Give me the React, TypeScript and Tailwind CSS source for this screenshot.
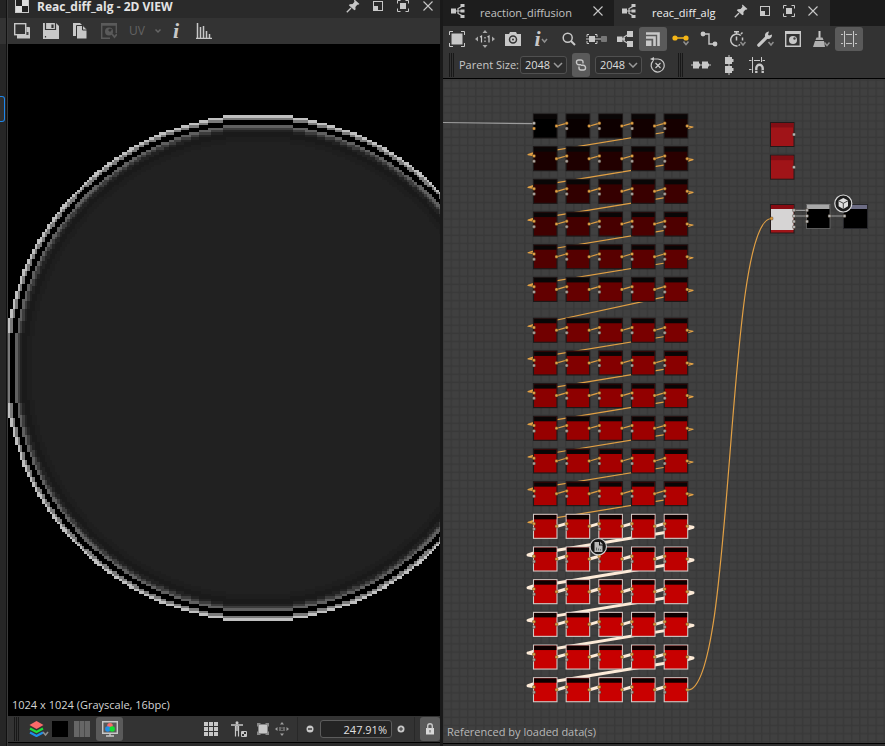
import React from "react";

type Kids = { children: React.ReactNode };

const INK = "#c8c8c8";

function Glyph({ children, w = 16, h = 16 }: Kids & { w?: number; h?: number }) {
  return (
    <svg width={w} height={h} viewBox={`0 0 ${w} ${h}`} fill="none" stroke={INK} className="block shrink-0" aria-hidden="true">
      {children}
    </svg>
  );
}

function Tool({ label, className = "w-7", children }: Kids & { label: string; className?: string }) {
  return (
    <button type="button" aria-label={label} className={`flex h-6 shrink-0 items-center justify-center ${className}`}>
      {children}
    </button>
  );
}

function Grip() {
  return (
    <span className="flex h-6 shrink-0 gap-px">
      <span className="w-px bg-[#181818]" />
      <span className="w-px bg-[#181818]" />
      <span className="w-px bg-[#181818]" />
    </span>
  );
}

const Caret = ({ x, y }: { x: number; y: number }) => (
  <path d={`M${x} ${y}l2.5 3 2.5-3`} stroke="#8f8f8f" strokeWidth="1.5" />
);

const PinIcon = () => (
  <Glyph w={14} h={14}>
    <path d="M8.5.5l5 4.5-1.3.8-.9-.1-1.900 2.200.2 2.600-1.200.8L2.800 6.200l1-1 2.800-.1 1.900-2.300-.5-1z" fill={INK} stroke="none" />
    <path d="M5 9L.8 13.2" strokeWidth="1.3" />
  </Glyph>
);
const DockIcon = () => (
  <Glyph w={12} h={12}>
    <rect x="1.5" y="1.5" width="9" height="9" />
    <rect x="1" y="6" width="5" height="5" fill={INK} stroke="none" />
  </Glyph>
);
const MaxIcon = () => (
  <Glyph w={14} h={14}>
    <path d="M1.5 4.5v-3h3M9.5 1.5h3v3M12.5 9.5v3h-3M4.5 12.5h-3v-3" />
    <rect x="4" y="4" width="6" height="6" fill={INK} stroke="none" />
  </Glyph>
);
const CloseIcon = () => (
  <Glyph w={12} h={12}>
    <path d="M1.5 1.5l9 9M10.5 1.5l-9 9" strokeWidth="1.1" />
  </Glyph>
);
const GraphIcon = () => (
  <Glyph w={16} h={16}>
    <path d="M5 8h3M13 3L8 5.5v5L13 13M8 8h4" strokeWidth="1.2" />
    <path d="M1 5.5h5v5H1zM10.5 1h4v3h-4zM10.5 6.5h4v3h-4zM10.5 12h4v3h-4z" fill={INK} stroke="none" />
  </Glyph>
);
const ChevronIcon = ({ dim = false }: { dim?: boolean }) => (
  <Glyph w={10} h={6}>
    <path d={dim ? "M2.5 1.5L5 4l2.5-2.5" : "M1 1l4 4 4-4"} stroke={dim ? "#666" : "#9a9a9a"} strokeWidth="1.5" />
  </Glyph>
);

function WindowButtons({ className }: { className: string }) {
  return (
    <>
      <Tool label="Pin" className={className}><PinIcon /></Tool>
      <Tool label="Dock" className={className}><DockIcon /></Tool>
      <Tool label="Maximize" className={className}><MaxIcon /></Tool>
      <Tool label="Close" className={className}><CloseIcon /></Tool>
    </>
  );
}

/* ---------- 2D view ---------- */

const CELL = 2.479;

// Rasterises a disc onto the texel grid, one run of texels per row.
function discPath(radius: number) {
  const n = Math.ceil(radius) + 1;
  let d = "";
  for (let row = -n; row < n; row++) {
    const y = row + 0.5;
    const rest = radius * radius - y * y;
    if (rest <= 0) continue;
    const half = Math.floor(Math.sqrt(rest) + 0.5);
    if (half > 0) d += `M${-half} ${row}h${half * 2}v1h${-half * 2}z`;
  }
  return d;
}

const RINGS: [number, string][] = [
  [102.46, "#c0c0c0"],
  [101.46, "#7a7a7a"],
  [100.46, "#000000"],
  [98.46, "#606060"],
  [97.46, "#3c3c3c"],
  [96.46, "#222222"],
  [95.46, "#1a1a1a"],
  [93.46, "#1e1e1e"],
  [91.46, "#212121"],
];

function Texture() {
  return (
    <svg className="absolute inset-0 h-full w-full" shapeRendering="crispEdges" aria-label="Texture preview">
      <g transform={`translate(250 324) scale(${CELL})`}>
        {RINGS.map(([r, color]) => (
          <path key={r} d={discPath(r)} fill={color} />
        ))}
      </g>
    </svg>
  );
}

function ViewPanel() {
  return (
    <section className="flex min-w-0 flex-1 flex-col">
      <header className="flex h-[18px] shrink-0 items-center bg-[#2a2a2a] pb-[6px] pl-[7px]">
        <Glyph w={14} h={14}>
          <rect x=".5" y=".5" width="13" height="13" fill="#222" />
          <path d="M7 1h6v6H7zM1 7h6v6H1z" fill="#dedede" stroke="none" />
        </Glyph>
        <h1 className="ml-2 flex-1 pt-0.5 text-[12px] font-bold leading-3 text-[#e4e4e4]">Reac_diff_alg - 2D VIEW</h1>
        <WindowButtons className="w-[25px]" />
      </header>

      <div className="flex h-[26px] shrink-0 items-center bg-[#333333]">
        <Tool label="View outputs">
          <Glyph w={18}>
            <path d="M13.5 4.5h3v8h-3" fill={INK} />
            <path d="M4 12h13v3.5H4z" fill={INK} stroke="none" />
            <rect x="1.7" y=".7" width="11" height="11" fill="#333" strokeWidth="1.4" />
            <path d="M13.5 9h2v3h-2z" fill="#444" stroke="none" />
          </Glyph>
        </Tool>
        <Tool label="Save" className="w-[29px]">
          <Glyph>
            <path d="M0 0h13l3 3v13H0z" fill={INK} stroke="none" />
            <path d="M2.5 0v6.5h10V0M9 1.5v3.5M10 1.5v3.5M2.5 13v1.5" stroke="#333" strokeWidth="1.2" />
          </Glyph>
        </Tool>
        <Tool label="Copy" className="w-[29px]">
          <Glyph w={14}>
            <path d="M0 0h7l3 3v10H0z" fill={INK} stroke="none" />
            <path d="M3.5 2.5h6.5l4 4V16H3.5z" fill={INK} stroke="#333" />
            <path d="M9.500 3v4H14" stroke="#333" />
          </Glyph>
        </Tool>
        <Tool label="Environment" className="w-[29px]">
          <Glyph>
            <path d="M15.3 10V.7H.7v14.6H9M1 2h14" stroke="#5a5a5a" strokeWidth="1.4" />
            <circle cx="8" cy="8.5" r="4" fill="#5a5a5a" stroke="none" />
            <path d="M7 7l2-1.500 2 1-2 2.500z" fill="#333" stroke="none" />
            <path d="M11 11l2.500 3L16 11" stroke="#5a5a5a" strokeWidth="1.8" />
          </Glyph>
        </Tool>
        <button type="button" className="flex h-6 w-[41px] shrink-0 items-center gap-2 pl-[6px] text-[12px] text-[#636363]">
          UV
          <ChevronIcon dim />
        </button>
        <Tool label="Information" className="w-6">
          <span className="font-['Liberation_Serif',serif] text-[22px] font-bold italic leading-5 text-[#c8c8c8]">i</span>
        </Tool>
        <Tool label="Histogram" className="w-8">
          <Glyph>
            <path d="M0 15.500h16M1.500 0v15M4.500 4v11M7.500 3v12M10.500 8v7M13.500 11v4" strokeWidth="1.5" />
          </Glyph>
        </Tool>
      </div>

      <div className="relative flex min-h-0 flex-1 items-end overflow-hidden bg-black">
        <Texture />
        <p className="relative pb-[3px] pl-1 text-[11px] leading-4 text-[#d4d4d4]">1024 x 1024 (Grayscale, 16bpc)</p>
      </div>

      <footer className="flex h-[26px] shrink-0 items-center bg-[#333333] pl-[6px]">
        <Grip />
        <Tool label="Channels" className="ml-[6px] w-[27px]">
          <Glyph w={20}>
            <path d="M1 11.500l6.500 3.500 6.500-3.500" stroke="#1f8fe8" strokeWidth="2.2" />
            <path d="M1 7.500L7.500 11 14 7.500" stroke="#1fe03a" strokeWidth="2.2" />
            <path d="M7.500 0l7 4-7 4-7-4z" fill="#fb6a6a" stroke="none" />
            <Caret x={14} y={11} />
          </Glyph>
        </Tool>
        <button type="button" aria-label="Background colour" className="h-4 w-4 shrink-0 bg-black" />
        <Tool label="Tiling">
          <Glyph>
            <path d="M0 0h16v16H0z" fill="#666" stroke="none" />
            <path d="M5.500 0v16M10.500 0v16" stroke="#4a4a4a" />
          </Glyph>
        </Tool>
        <Tool label="Colour display" className="w-[27px] rounded-[3px] bg-[#5a5a5a]">
          <Glyph>
            <path d="M.7.7h14.6v11.6H.7zM8 12v2.500M4 15h8" strokeWidth="1.4" />
            <circle cx="8" cy="4.800" r="2.800" fill="#f86a6a" stroke="none" />
            <circle cx="5.800" cy="8" r="2.700" fill="#1f8fe8" stroke="none" />
            <circle cx="10.200" cy="8" r="2.700" fill="#10e030" stroke="none" />
          </Glyph>
        </Tool>
        <span className="flex-1" />
        <Tool label="Grid">
          <Glyph w={14} h={14}>
            <path d="M0 0h4v4H0zM5 0h4v4H5zM10 0h4v4h-4zM0 5h4v4H0zM5 5h4v4H5zM10 5h4v4h-4zM0 10h4v4H0zM5 10h4v4H5zM10 10h4v4h-4z" fill={INK} stroke="none" />
          </Glyph>
        </Tool>
        <Tool label="Physical size">
          <Glyph>
            <circle cx="6" cy="1.800" r="1.500" fill={INK} stroke="none" />
            <path d="M0 4h12M6 4v6" strokeWidth="1.4" />
            <path d="M4.500 5v10.500M7.500 5v10.500" strokeWidth="1.2" />
            <path d="M10.500 10.500h5v5h-5z" fill="#333" />
            <path d="M11 11h2v2h-2zM13 13h2v2h-2z" fill={INK} stroke="none" />
          </Glyph>
        </Tool>
        <Tool label="Fit to view" className="w-5">
          <Glyph w={12} h={12}>
            <path d="M0 0h3l1 1h4l1-1h3v3l-1 1v4l1 1v3H9l-1-1H4l-1 1H0V9l1-1V4L0 3z" fill="#888" stroke="none" />
            <path d="M2 2h8v8H2z" fill={INK} stroke="none" />
          </Glyph>
        </Tool>
        <Tool label="Actual size" className="w-[18px]">
          <Glyph w={14} h={14}>
            <path d="M7 0l2 2.500H5zM7 14l-2-2.500h4zM0 7l2.500-2v4zM14 7l-2.500 2V5z" fill="#a0a0a0" stroke="none" />
            <path d="M5 5v4M9 5v4M7 5.500v1M7 8v1" stroke="#a0a0a0" />
          </Glyph>
        </Tool>
        <span className="ml-[6px] mr-[5px] h-6 w-px bg-[#282828]" />
        <Tool label="Zoom out" className="w-[14px]">
          <Glyph w={8} h={8}>
            <circle cx="4" cy="4" r="3.500" fill={INK} stroke="none" />
            <path d="M2 4h4" stroke="#333" strokeWidth="1.4" />
          </Glyph>
        </Tool>
        <input
          aria-label="Zoom"
          defaultValue="247.91%"
          className="ml-[3px] h-[18px] w-[72px] rounded-[3px] border border-[#5c5c5c] bg-[#242424] pr-1 text-right text-[11px] leading-4 text-[#e0e0e0]"
        />
        <Tool label="Zoom in" className="w-[18px]">
          <Glyph w={8} h={8}>
            <circle cx="4" cy="4" r="3.500" fill={INK} stroke="none" />
            <path d="M2 4h4M4 2v4" stroke="#333" />
          </Glyph>
        </Tool>
        <span className="ml-1 mr-[5px] h-6 w-px bg-[#282828]" />
        <Tool label="Lock" className="w-5 rounded-[3px] bg-[#5a5a5a]">
          <Glyph w={8} h={12}>
            <path d="M0 5h8v6.500H0z" fill="#d8d8d8" stroke="none" />
            <path d="M1.700 5.500V3a2.300 2.300 0 014.600 0v2.500" strokeWidth="1.4" />
            <path d="M4 7v2.500" stroke="#5a5a5a" />
          </Glyph>
        </Tool>
      </footer>
      <div className="h-1 shrink-0 border-t border-black bg-[#2b2b2b]" />
    </section>
  );
}

/* ---------- Graph ---------- */

const UNIT = 8.17;
const STEP = UNIT * 4;
const ROWS = 18;
const COLS = 5;
const SELECTED_FROM = 12;
const AMBER = "#e2a044";
const CREAM = "#fdebd8";

const rowTop = (r: number) => 35 + r * STEP + (r > 5 ? UNIT : 0);
const colLeft = (c: number) => 90.5 + c * STEP;

function Port({ x, y, color = AMBER }: { x: number; y: number; color?: string }) {
  return <rect x={x - 1.5} y={y - 1.5} width="3" height="3" rx="1" fill={color} stroke="#3a2a18" strokeWidth=".4" />;
}

function Chain() {
  const wires: React.ReactNode[] = [];
  const nodes: React.ReactNode[] = [];
  const links: React.ReactNode[] = [];
  for (let r = 0; r < ROWS; r++) {
    const y = rowTop(r);
    const selected = r >= SELECTED_FROM;
    const wire = { stroke: selected ? CREAM : AMBER, strokeWidth: selected ? 3 : 1.2, fill: "none" };
    if (r < ROWS - 1) {
      const n = rowTop(r + 1);
      wires.push(
        <path key={r} {...wire} strokeLinejoin="round" d={`M244.5 ${y + 12}L250 ${y + 13}L245 ${y + 14.5}L85 ${n + 8}L91 ${n + 9}M85 ${n + 8}l6-2`} />,
      );
    }
    for (let c = 0; c < COLS; c++) {
      const x = colLeft(c);
      const i = r * COLS + c;
      const red = i === 0 ? 0 : Math.round(5 + 4.3 * i - 0.0235 * i * i);
      nodes.push(
        <g key={i}>
          <rect x={x} y={y} width="23.5" height="24" fill={`rgb(${red},0,0)`} stroke={selected ? "#d0cac6" : "#1c1818"} strokeWidth="1.1" />
          <rect x={x + 0.6} y={y + 0.6} width="22.3" height="4.4" fill={selected ? "#0e0000" : "#090606"} />
        </g>,
      );
      if (c < COLS - 1) links.push(<path key={`l${i}`} {...wire} d={`M${x + 23.5} ${y + 12}L${x + STEP} ${y + 9.3}`} />);
      links.push(
        <g key={`p${i}`}>
          <Port x={x + 0.5} y={y + 9.3} color={i === 0 ? "#b8b8b8" : AMBER} />
          <Port x={x + 0.5} y={y + 14.6} color={i === 0 ? AMBER : "#a8a09c"} />
          <Port x={x + 23} y={y + 12} />
        </g>,
      );
    }
  }
  return (
    <>
      <path d="M0 43.5L91 44.7" stroke="#9c9c9c" strokeWidth="1.2" />
      {wires}
      {nodes}
      {links}
    </>
  );
}

function OutputNodes() {
  const gray = "#b4b4b4";
  return (
    <g>
      {[43.5, 76.2].map((y) => (
        <g key={y}>
          <rect x="327.5" y={y} width="23.5" height="24" fill="#a01418" stroke="#241a1a" />
          <rect x="328" y={y + 0.5} width="22.5" height="4.5" fill="#830e14" />
          <Port x={351} y={y + 12} color={gray} />
        </g>
      ))}
      <path d="M351 131.3h13M351 137h13M387 137h15" stroke="#9a9a9a" strokeWidth="1.2" />
      <rect x="327.5" y="125.5" width="23.5" height="28.5" fill="#a01418" stroke="#241a1a" />
      <rect x="328" y="126" width="22.5" height="4" fill="#870b12" />
      <rect x="328" y="130" width="22.5" height="21" fill="#d6d4d4" />
      <rect x="363.5" y="125.5" width="23.5" height="24" fill="#000" stroke="#6c6c6c" strokeWidth=".8" />
      <rect x="364" y="125.5" width="22.5" height="4.500" fill="#a8a8a8" />
      <rect x="400.5" y="125.5" width="24" height="24" fill="#000" stroke="#26262a" />
      <rect x="401" y="126" width="23" height="4" fill="#6c6c84" />
      {[131.3, 137, 142.5, 148].map((y) => <Port key={y} x={351} y={y} color={gray} />)}
      {[131.3, 137, 142.5].map((y) => <Port key={y} x={364} y={y} color={gray} />)}
      <Port x={386.5} y={137} color={gray} />
      <Port x={401.5} y={137} color={gray} />
      <path d="M245 611C292 610 282 139.5 328.5 139.5" fill="none" stroke={AMBER} strokeWidth="1.2" />
      <Port x={328.5} y={139.5} />
      <circle cx="400.3" cy="124.5" r="8.5" fill="#1d1d1d" stroke="#dadada" strokeWidth="1.2" />
      <path d="M400.3 119l4.700 2.600v5.600l-4.700 2.700-4.700-2.700v-5.600z" fill="#e0e0e0" />
      <path d="M395.6 121.8l4.700 2.500 4.700-2.500M400.3 124.3v5.400" fill="none" stroke="#333" strokeWidth=".9" />
    </g>
  );
}

function GraphCanvas() {
  return (
    <svg className="absolute inset-0 h-full w-full" aria-label="Node graph">
      <defs>
        <pattern id="grid" width={UNIT} height={UNIT} x="0.3" y="1.7" patternUnits="userSpaceOnUse">
          <rect width={UNIT} height={UNIT} fill="#393939" />
          <rect x=".6" y=".2" width="6.6" height="6.6" fill="#404040" />
        </pattern>
      </defs>
      <rect width="100%" height="100%" fill="url(#grid)" />
      <Chain />
      <OutputNodes />
      <circle cx="155.3" cy="467.7" r="8.2" fill="#161616" stroke="#cfcfcf" strokeWidth="1.2" />
      <path d="M151.5 463h4.5v3.500h3.500v6.500h-8z" fill="#b8b8b8" />
      <path d="M157 462.500l3 3h-3z" fill="#b8b8b8" />
      <path d="M153.500 468.500v3M155.500 469.500v2M157.500 470v1.500" stroke="#444" strokeWidth=".7" fill="none" />
    </svg>
  );
}

function SizeSelect({ label }: { label: string }) {
  return (
    <span className="relative flex shrink-0 items-center">
      <select
        aria-label={label}
        className="h-[18px] w-[47px] appearance-none rounded-[3px] border border-[#505050] bg-[#2c2c2c] pl-1 text-[11px] leading-4 text-[#dcdcdc]"
      >
        <option>2048</option>
      </select>
      <span className="pointer-events-none absolute right-1">
        <ChevronIcon />
      </span>
    </span>
  );
}

function GraphToolbar() {
  return (
    <div className="flex h-[26px] shrink-0 items-center overflow-hidden">
      <Tool label="Fit all">
        <Glyph>
          <path d="M.5 4V.5H4M12 .5h3.500V4M15.500 12v3.500H12M4 15.500H.5V12" />
          <path d="M2.500 2.500h11v11h-11z" fill={INK} stroke="none" />
        </Glyph>
      </Tool>
      <Tool label="Actual size">
        <Glyph w={20} h={18}>
          <path d="M10 0l2.500 3h-5zM10 18l-2.500-3h5zM0 9l3-2.500v5zM20 9l-3 2.500v-5z" fill="#a8a8a8" stroke="none" />
          <path d="M5 7l1.500-1v6.500M12.500 7l1.500-1v6.500M10 7v1.500M10 10.500V12" strokeWidth="1.2" />
        </Glyph>
      </Tool>
      <Tool label="Snapshot">
        <Glyph>
          <path d="M0 3h4l1-2h6l1 2h4v12H0z" fill={INK} stroke="none" />
          <circle cx="8" cy="8.500" r="3.500" stroke="#333" strokeWidth="1.5" />
          <circle cx="8" cy="8.500" r="1" fill="#333" stroke="none" />
        </Glyph>
      </Tool>
      <Tool label="Information">
        <span className="font-['Liberation_Serif',serif] text-[22px] font-bold italic leading-5 text-[#c8c8c8]">i</span>
        <Glyph w={7} h={10}><Caret x={1} y={5} /></Glyph>
      </Tool>
      <Tool label="Search">
        <Glyph w={14} h={14}>
          <circle cx="5.700" cy="5.700" r="4.500" strokeWidth="1.5" />
          <path d="M9 9l4 4" strokeWidth="2" />
        </Glyph>
      </Tool>
      <Tool label="Connected nodes">
        <Glyph w={22} h={10}>
          <path d="M1 3V.5h2M9 .5h2V3M11 7v2.500H9M3 9.500H1V7M0 5h16" />
          <path d="M3 2h6v6H3z" fill={INK} stroke="none" />
          <path d="M15.500 2.500h5v5h-5z" fill="#777" stroke="#777" />
        </Glyph>
      </Tool>
      <Tool label="Graph hierarchy">
        <Glyph>
          <path d="M5 8h3M12 3L7 6v4l5 3" strokeWidth="1.3" />
          <path d="M0 5.500h5.500v5.500H0zM10 0h6v6h-6zM10 10h6v6h-6z" fill={INK} stroke="none" />
        </Glyph>
      </Tool>
      <Tool label="Align nodes" className="w-7 rounded-[3px] bg-[#5a5a5a]">
        <Glyph w={14} h={14}>
          <path d="M0 1.500h12.500V14M0 5.500h8.500V14" strokeWidth="2.6" />
          <path d="M0 8.500h5.500V14H0z" fill={INK} stroke="none" />
        </Glyph>
      </Tool>
      <Tool label="Link colour">
        <Glyph w={18} h={14}>
          <path d="M3 6h11" stroke="#f5b617" strokeWidth="1.5" />
          <circle cx="3" cy="6" r="2.600" fill="#f5b617" stroke="none" />
          <circle cx="14" cy="6" r="2.600" fill="#f5b617" stroke="none" />
          <Caret x={11.5} y={9.5} />
        </Glyph>
      </Tool>
      <Tool label="Link shape">
        <Glyph w={18}>
          <path d="M3 3h6v10h6" strokeWidth="1.4" />
          <circle cx="3" cy="3" r="2.400" fill={INK} stroke="none" />
          <circle cx="15" cy="13" r="2.400" fill={INK} stroke="none" />
        </Glyph>
      </Tool>
      <Tool label="Timings">
        <Glyph w={17}>
          <path d="M11.800 4.500A6 6 0 108.500 14.900M7.500 0v3M5 .7h5M12 3l1.500-1.500M7.500 5.500V9.500M13.500 6.500v3" strokeWidth="1.5" />
          <path d="M9.500 14.500l1.500-1" strokeWidth="1.3" />
          <Caret x={11.5} y={11} />
        </Glyph>
      </Tool>
      <Tool label="Tools">
        <Glyph w={17}>
          <path d="M1.800 14.200l8-8" strokeWidth="3.2" strokeLinecap="round" />
          <path d="M15 3.500l-3 1-1-1L12 .5A4 4 0 008 5.500 4 4 0 0011 8a4 4 0 004-4.500z" fill={INK} stroke="none" />
          <Caret x={11.5} y={11} />
        </Glyph>
      </Tool>
      <Tool label="Thumbnails">
        <Glyph>
          <path d="M.7 1.500h14.600v13.800H.7z" strokeWidth="1.4" />
          <path d="M0 0h16v3H0z" fill={INK} stroke="none" />
          <circle cx="8" cy="9" r="4" fill={INK} stroke="none" />
          <circle cx="9.500" cy="7.500" r="1.200" fill="#444" stroke="none" />
        </Glyph>
      </Tool>
      <Tool label="Clean">
        <Glyph w={17}>
          <path d="M6.500 0v7" strokeWidth="2" />
          <path d="M3.500 6.500h6l1 2.500h-8zM2 10h9l1 6H0z" fill="#b0b0b0" stroke="none" />
          <Caret x={11.5} y={11.5} />
        </Glyph>
      </Tool>
      <Tool label="Snap to grid" className="w-7 rounded-[3px] bg-[#5a5a5a]">
        <Glyph>
          <path d="M3.500 0v16M12.500 0v16M0 3.500h2M5 3.500h6M14 3.500h2M0 12.500h2M5 12.500h6M14 12.500h2" />
        </Glyph>
      </Tool>
    </div>
  );
}

function GraphPanel() {
  return (
    <section className="flex min-w-0 flex-1 flex-col">
      <nav className="flex h-[26px] shrink-0 items-start overflow-hidden bg-[#1b1b1b] text-[11px]">
        <div className="flex h-[26px] w-[171px] shrink-0 items-center bg-[#1d1d1d] pb-1 pl-[7px]">
          <GraphIcon />
          <button type="button" className="ml-[14px] flex-1 pt-1 text-left text-[#c2c2c2]">reaction_diffusion</button>
          <Tool label="Close" className="w-8"><CloseIcon /></Tool>
        </div>
        <div className="flex h-[26px] w-[216px] shrink-0 items-center bg-[#2d2d2d] pb-1 pl-[7px]">
          <GraphIcon />
          <button type="button" className="ml-[15px] flex-1 pt-1 text-left text-[#f0f0f0]">reac_diff_alg</button>
          <WindowButtons className="w-6" />
          <span className="w-[5px]" />
        </div>
      </nav>
      <div className="shrink-0 border-b border-black bg-[#333333]">
        <GraphToolbar />
        <div className="flex h-[26px] items-center overflow-hidden pl-[6px] text-[11px] text-[#c8c8c8]">
          <Grip />
          <span className="ml-[5px] w-[61px] shrink-0 whitespace-nowrap">Parent Size:</span>
          <SizeSelect label="Parent width" />
          <Tool label="Link sizes" className="mx-[5px] w-[18px] rounded-[3px] bg-[#5a5a5a]">
            <Glyph w={12} h={12}>
              <path d="M8 4.500V3a2 2 0 00-2-2H3.500a2 2 0 00-2 2v.5a2.200 2.200 0 002.200 2.200H6M4 7.500V9a2 2 0 002 2h2.500a2 2 0 002-2v-.5a2.200 2.200 0 00-2.200-2.200H6" strokeWidth="1.4" />
            </Glyph>
          </Tool>
          <SizeSelect label="Parent height" />
          <Tool label="Reset size" className="w-8">
            <Glyph>
              <path d="M3 4A6.500 6.500 0 108 2H3M5.500 6l5 5M10.500 6l-5 5" strokeWidth="1.2" />
              <path d="M0 2L4 0v4z" fill={INK} stroke="none" />
            </Glyph>
          </Tool>
          <span className="mx-1 flex"><Grip /></span>
          <Tool label="Align horizontally">
            <Glyph w={20} h={8}>
              <path d="M0 4h20" />
              <path d="M2 .5h6v2h1v3H8v2H2zM11 .5h6v2h1v3h-1v2h-6z" fill={INK} stroke="none" />
            </Glyph>
          </Tool>
          <Tool label="Align vertically">
            <Glyph w={9} h={20}>
              <path d="M4 0v20" />
              <path d="M0 2h7v2h1.500v3H7v2H0zM0 11h7v2h1.500v3H7v2H0z" fill={INK} stroke="none" />
            </Glyph>
          </Tool>
          <Tool label="Snap">
            <Glyph>
              <path d="M3.500 0v16M12.500 0v5M0 3.500h2.500M5 3.500h6M13.500 3.500H16M0 12.500h2.500" />
              <path d="M7.300 16v-5a3.200 3.200 0 016.400 0v5" strokeWidth="2.4" />
              <path d="M6 13.500h3M12.500 13.500h3" stroke="#333" strokeWidth=".8" />
            </Glyph>
          </Tool>
        </div>
      </div>
      <div className="relative flex min-h-0 flex-1 items-end overflow-hidden bg-[#3c3c3c]">
        <GraphCanvas />
        <p className="relative pb-[3px] pl-1 text-[11px] leading-4 text-[#b8b8b8]">Referenced by loaded data(s)</p>
      </div>
      <div className="h-[3px] shrink-0 border-t border-black bg-[#303030]" />
    </section>
  );
}

export default function App() {
  return (
    <main className="grid h-screen w-full grid-cols-[443fr_442fr] overflow-hidden bg-[#1a1a1a] font-['Open_Sans','Noto_Sans',sans-serif]">
      <div className="flex min-w-0 border-r-[3px] border-[#191919]">
        <aside className="flex w-2 shrink-0 flex-col border-r border-[#3a3a3a] bg-[#111111] pr-px">
          <div className="h-[18px] bg-[#232323]" />
          <div className="h-[26px] bg-[#333333]" />
          <div className="flex-1 bg-[#262626] pt-[52px]">
            <button type="button" aria-label="Expand panel" className="block h-[26px] w-[5px] rounded-r-[3px] border border-l-0 border-[#1e86ea] bg-[#303030]" />
          </div>
        </aside>
        <ViewPanel />
      </div>
      <GraphPanel />
    </main>
  );
}
